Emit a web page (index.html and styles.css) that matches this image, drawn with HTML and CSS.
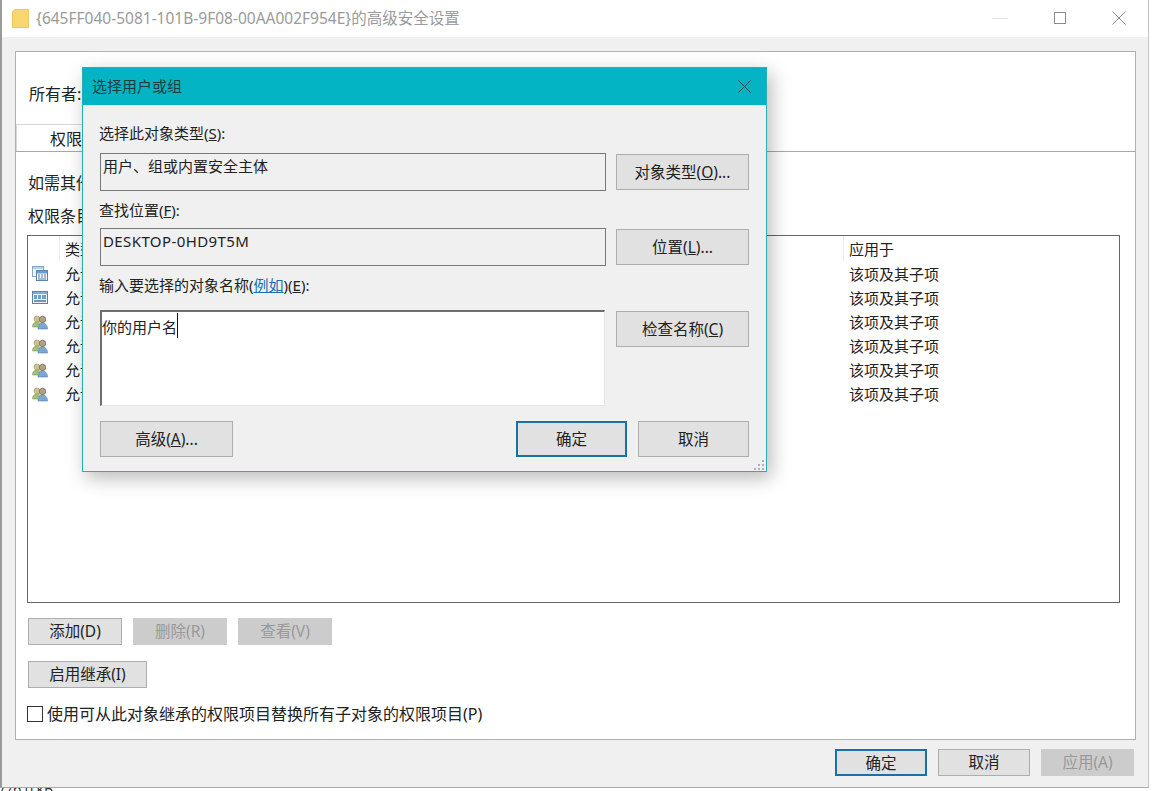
FILE: index.html
```html
<!DOCTYPE html>
<html lang="zh-CN">
<head>
    <meta charset="UTF-8">
    <meta name="viewport" content="width=device-width, initial-scale=1.0">
    <title>选择用户或组</title>
    <link rel="stylesheet" href="styles.css">
</head>
<body>
    <svg class="icon-defs" width="0" height="0">
        <symbol id="icon-apps" viewBox="0 0 16 16">
            <rect x="0.5" y="0.5" width="11" height="10" fill="#eef4fa" stroke="#8aa6c0"/>
            <rect x="1" y="1" width="10" height="2" fill="#b4cfe6"/>
            <rect x="4.5" y="4.5" width="11" height="10" fill="#f4f8fc" stroke="#5b83a8"/>
            <rect x="5" y="5" width="10" height="2.5" fill="#6b9fd0"/>
            <path d="M6 9h2M9 9h2M12 9h2M6 11h2M9 11h2M12 11h2M6 13h8" stroke="#4f7fa8"/>
        </symbol>
        <symbol id="icon-packages" viewBox="0 0 16 16">
            <rect x="0.5" y="1.5" width="15" height="12" fill="#e8f1f9" stroke="#5b83a8"/>
            <rect x="1" y="2" width="14" height="2" fill="#7fb0da"/>
            <path d="M2 6h3M6 6h3M10 6h4M2 8h3M6 8h3M10 8h4" stroke="#3f88c8" stroke-width="1.4"/>
            <path d="M2 11h12" stroke="#4f6f8e" stroke-width="1.4"/>
        </symbol>
        <symbol id="icon-users" viewBox="0 0 16 16">
            <circle cx="5" cy="5" r="3" fill="#d4c08e" stroke="#8f9a6c" stroke-width="0.6"/>
            <path d="M0.5 13c0-3.500 2-5 4.500-5s4 1.500 4 5z" fill="#a2c078" stroke="#84a05e" stroke-width="0.6"/>
            <circle cx="10.500" cy="5.500" r="3.200" fill="#b8a27a" stroke="#55606a" stroke-width="0.7"/>
            <path d="M6 15c0-4 2-6 4.500-6s5 2 5 6z" fill="#7aa8d4" stroke="#5b83a8" stroke-width="0.6"/>
        </symbol>
    </svg>

    <p class="desktop-text">/76.0 kB</p>

    <div class="window">
        <div class="titlebar">
            <svg class="folder-icon" width="17" height="19" viewBox="0 0 17 19">
                <path d="M0.500 2.500 L3 0.500 H16.500 V18.500 H0.500 Z" fill="#f7d76e" stroke="#e8c860"/>
            </svg>
            <span class="title-text">{645FF040-5081-101B-9F08-00AA002F954E}的高级安全设置</span>
            <div class="window-controls">
                <svg width="16" height="12" viewBox="0 0 16 12"><path d="M0 6.500h16" stroke="#e4e4e4"/></svg>
                <svg width="12" height="12" viewBox="0 0 12 12"><rect x="0.500" y="0.500" width="11" height="11" fill="none" stroke="#8a8a8a"/></svg>
                <svg width="14" height="14" viewBox="0 0 14 14"><path d="M0.500 0.500l13 13M13.500 0.500l-13 13" stroke="#8a8a8a"/></svg>
            </div>
        </div>

        <div class="panel">
            <div class="owner-row">所有者:</div>
            <div class="tab-strip">
                <div class="tab">权限</div>
            </div>
            <div class="panel-body">
                <p class="info-text">如需其他信息，请双击权限项目。</p>
                <p class="entries-label">权限条目:</p>

                <div class="entries">
                    <div class="entry-row entry-head">
                        <span></span>
                        <span>类型</span>
                        <span>应用于</span>
                    </div>
                    <div class="entry-row">
                        <svg class="entry-icon"><use href="#icon-apps"/></svg>
                        <span>允许</span>
                        <span class="applies">该项及其子项</span>
                    </div>
                    <div class="entry-row">
                        <svg class="entry-icon"><use href="#icon-packages"/></svg>
                        <span>允许</span>
                        <span class="applies">该项及其子项</span>
                    </div>
                    <div class="entry-row">
                        <svg class="entry-icon"><use href="#icon-users"/></svg>
                        <span>允许</span>
                        <span class="applies">该项及其子项</span>
                    </div>
                    <div class="entry-row">
                        <svg class="entry-icon"><use href="#icon-users"/></svg>
                        <span>允许</span>
                        <span class="applies">该项及其子项</span>
                    </div>
                    <div class="entry-row">
                        <svg class="entry-icon"><use href="#icon-users"/></svg>
                        <span>允许</span>
                        <span class="applies">该项及其子项</span>
                    </div>
                    <div class="entry-row">
                        <svg class="entry-icon"><use href="#icon-users"/></svg>
                        <span>允许</span>
                        <span class="applies">该项及其子项</span>
                    </div>
                </div>

                <div class="entry-buttons">
                    <button class="btn btn-entry">添加(D)</button>
                    <button class="btn btn-entry" disabled>删除(R)</button>
                    <button class="btn btn-entry" disabled>查看(V)</button>
                </div>
                <button class="btn btn-inherit">启用继承(I)</button>
                <label class="replace-row">
                    <span class="checkbox"></span>
                    <span>使用可从此对象继承的权限项目替换所有子对象的权限项目(P)</span>
                </label>
            </div>
        </div>

        <div class="window-footer">
            <button class="btn btn-footer btn-default">确定</button>
            <button class="btn btn-footer">取消</button>
            <button class="btn btn-footer" disabled>应用(A)</button>
        </div>
    </div>

    <div class="dialog">
        <div class="dialog-titlebar">
            <span class="dialog-title">选择用户或组</span>
            <svg width="13" height="13" viewBox="0 0 13 13"><path d="M0.500 0.500l12 12M12.500 0.500l-12 12" stroke="#2b4a50"/></svg>
        </div>
        <div class="dialog-body">
            <div class="dialog-grid">
                <p class="field-label label-first">选择此对象类型(<u>S</u>):</p>
                <div class="field">用户、组或内置安全主体</div>
                <button class="btn btn-side">对象类型(<u>O</u>)...</button>

                <p class="field-label">查找位置(<u>F</u>):</p>
                <div class="field field-latin">DESKTOP-0HD9T5M</div>
                <button class="btn btn-side">位置(<u>L</u>)...</button>

                <p class="field-label label-names">输入要选择的对象名称(<a class="link" href="#">例如</a>)(<u>E</u>):</p>
                <div class="names-box">你的用户名<span class="caret"></span></div>
                <button class="btn btn-side">检查名称(<u>C</u>)</button>
            </div>
            <div class="dialog-footer">
                <button class="btn btn-side btn-advanced">高级(<u>A</u>)...</button>
                <div class="dialog-actions">
                    <button class="btn btn-dialog btn-default">确定</button>
                    <button class="btn btn-dialog">取消</button>
                </div>
            </div>
        </div>
        <svg class="grip" width="11" height="11" viewBox="0 0 11 11">
            <path d="M8 1h2v2H8zM4 5h2v2H4zM8 5h2v2H8zM0 9h2v2H0zM4 9h2v2H4zM8 9h2v2H8z" fill="#a9b4b6"/>
        </svg>
    </div>
</body>
</html>
```

FILE: styles.css
```css
* {
    margin: 0;
    padding: 0;
    box-sizing: border-box;
    font-family: "Noto Sans", "Noto Sans CJK SC", sans-serif;
}

html, body {
    height: 100%;
    overflow: hidden;
}

body {
    position: relative;
    background-color: #fff;
    color: #222;
    font-size: 15px;
}

.icon-defs {
    position: absolute;
}

.desktop-text {
    padding-top: 779px;
    font-size: 14px;
    line-height: 20px;
    color: #333;
}

/* main window */
.window {
    position: absolute;
    left: 0;
    top: 0;
    width: 1149px;
    height: 788px;
    display: flex;
    flex-direction: column;
    background-color: #f0f0f0;
    border-left: 2px solid #9a9a9a;
    border-right: 1px solid #c4c4c4;
    border-bottom: 1px solid #a8a8a8;
}

.titlebar {
    height: 37px;
    display: flex;
    align-items: center;
    background-color: #fff;
    padding-left: 10px;
}

.folder-icon {
    margin-right: 7px;
}

.title-text {
    margin-bottom: 2px;
    color: #9a9a9a;
    font-size: 15.5px;
}

.window-controls {
    margin-left: auto;
    margin-bottom: 1px;
    width: 156px;
    padding-right: 22px;
    display: flex;
    align-items: center;
    justify-content: space-between;
}

.panel {
    margin: 14px 0 0 13px;
    width: 1121px;
    height: 689px;
    background-color: #fff;
    border: 1px solid #b0b0b0;
}

.owner-row {
    margin: 32px 0 0 13px;
    height: 20px;
    line-height: 20px;
    font-size: 16px;
}

.tab-strip {
    margin-top: 20px;
    height: 28px;
    border-bottom: 1px solid #a8a8a8;
}

.tab {
    width: 96px;
    height: 27px;
    padding-left: 33px;
    line-height: 28px;
    font-size: 16px;
    border-top: 1px solid #d8d8d8;
    border-left: 1px solid #d8d8d8;
}

.panel-body {
    padding: 0 15px 0 11px;
}

.info-text {
    margin: 21px 0 0 1px;
    height: 20px;
    line-height: 20px;
    font-size: 16px;
}

.entries-label {
    margin: 13px 0 0 1px;
    height: 20px;
    line-height: 20px;
    font-size: 16px;
}

.entries {
    margin-top: 9px;
    height: 368px;
    border: 1px solid #666;
}

.entry-row {
    height: 24px;
    padding-bottom: 1px;
    display: grid;
    grid-template-columns: 32px 784px 1fr;
    align-items: center;
    line-height: 22px;
}

.entry-head {
    height: 26px;
    padding-bottom: 0;
}

.entry-head span {
    height: 26px;
    line-height: 26px;
    border-right: 1px solid #ececec;
}

.entry-head span:last-child {
    border-right: none;
}

.entry-row > span:nth-child(2),
.entry-row > span:nth-child(3) {
    padding-left: 5px;
}

.entry-icon {
    width: 16px;
    height: 16px;
    margin-left: 4px;
}

.btn {
    padding-bottom: 2px;
    background-color: #e1e1e1;
    border: 1px solid #adadad;
    color: #222;
    font-size: 15.5px;
    text-align: center;
}

.btn:disabled {
    background-color: #ccc;
    border-color: #ccc;
    color: #999;
}

.btn-default {
    border: 2px solid #1a6fa5;
}

.entry-buttons {
    margin: 15px 0 0 1px;
    display: flex;
    gap: 11px;
}

.btn-entry {
    width: 94px;
    height: 27px;
}

.btn-inherit {
    display: block;
    margin: 16px 0 0 1px;
    width: 119px;
    height: 27px;
}

.replace-row {
    margin-top: 16px;
    display: flex;
    align-items: center;
    gap: 4px;
    font-size: 16px;
    line-height: 20px;
}

.checkbox {
    width: 16px;
    height: 16px;
    background-color: #fff;
    border: 1px solid #333;
}

.window-footer {
    margin-top: 9px;
    padding-right: 14px;
    display: flex;
    justify-content: flex-end;
    gap: 11px;
}

.btn-footer {
    width: 92px;
    height: 27px;
}

.btn-footer:last-child {
    width: 93px;
}

/* dialog on top */
.dialog {
    position: absolute;
    left: 82px;
    top: 67px;
    width: 685px;
    height: 405px;
    background-color: #f0f0f0;
    border: 1px solid #29aeb9;
    box-shadow: 4px 6px 18px rgba(0,0,0,0.28);
}

.dialog-titlebar {
    height: 37px;
    padding: 0 15px 0 9px;
    display: flex;
    align-items: center;
    justify-content: space-between;
    background-color: #03b5c4;
    color: #1d3c42;
}

.dialog-title {
    margin-bottom: 2px;
}

.dialog-body {
    padding: 0 17px 0 16px;
}

.dialog-grid {
    display: grid;
    grid-template-columns: 507px 133px;
    column-gap: 10px;
    align-items: start;
}

.field-label {
    grid-column: 1 / -1;
    height: 18px;
    line-height: 18px;
    margin: 10px 0 9px;
}

.label-first {
    margin: 19px 0 11px;
}

.label-names {
    margin-bottom: 16px;
}

.field {
    margin-left: 1px;
    height: 38px;
    padding: 2px;
    line-height: 20px;
    background-color: #f0f0f0;
    border: 1px solid #777;
}

.field-latin {
    letter-spacing: 0.4px;
}

.btn-side {
    margin-top: 1px;
    width: 133px;
    height: 36px;
}

.names-box {
    margin-left: 1px;
    height: 96px;
    width: 505px;
    padding: 5px 0;
    line-height: 20px;
    background-color: #fff;
    border-top: 2px solid #6e6e6e;
    border-left: 2px solid #6e6e6e;
    border-right: 1px solid #e4e4e4;
    border-bottom: 1px solid #e4e4e4;
}

.caret {
    display: inline-block;
    height: 25px;
    margin-top: -4px;
    vertical-align: top;
    border-left: 1px solid #111;
}

.link {
    color: #1a6fb0;
}

.dialog-footer {
    margin-top: 15px;
    padding-left: 1px;
    display: flex;
    justify-content: space-between;
}

.btn-advanced {
    margin-top: 0;
}

.dialog-actions {
    display: flex;
    gap: 11px;
}

.btn-dialog {
    width: 111px;
    height: 36px;
}

.grip {
    position: absolute;
    right: 1px;
    bottom: 1px;
}
```
